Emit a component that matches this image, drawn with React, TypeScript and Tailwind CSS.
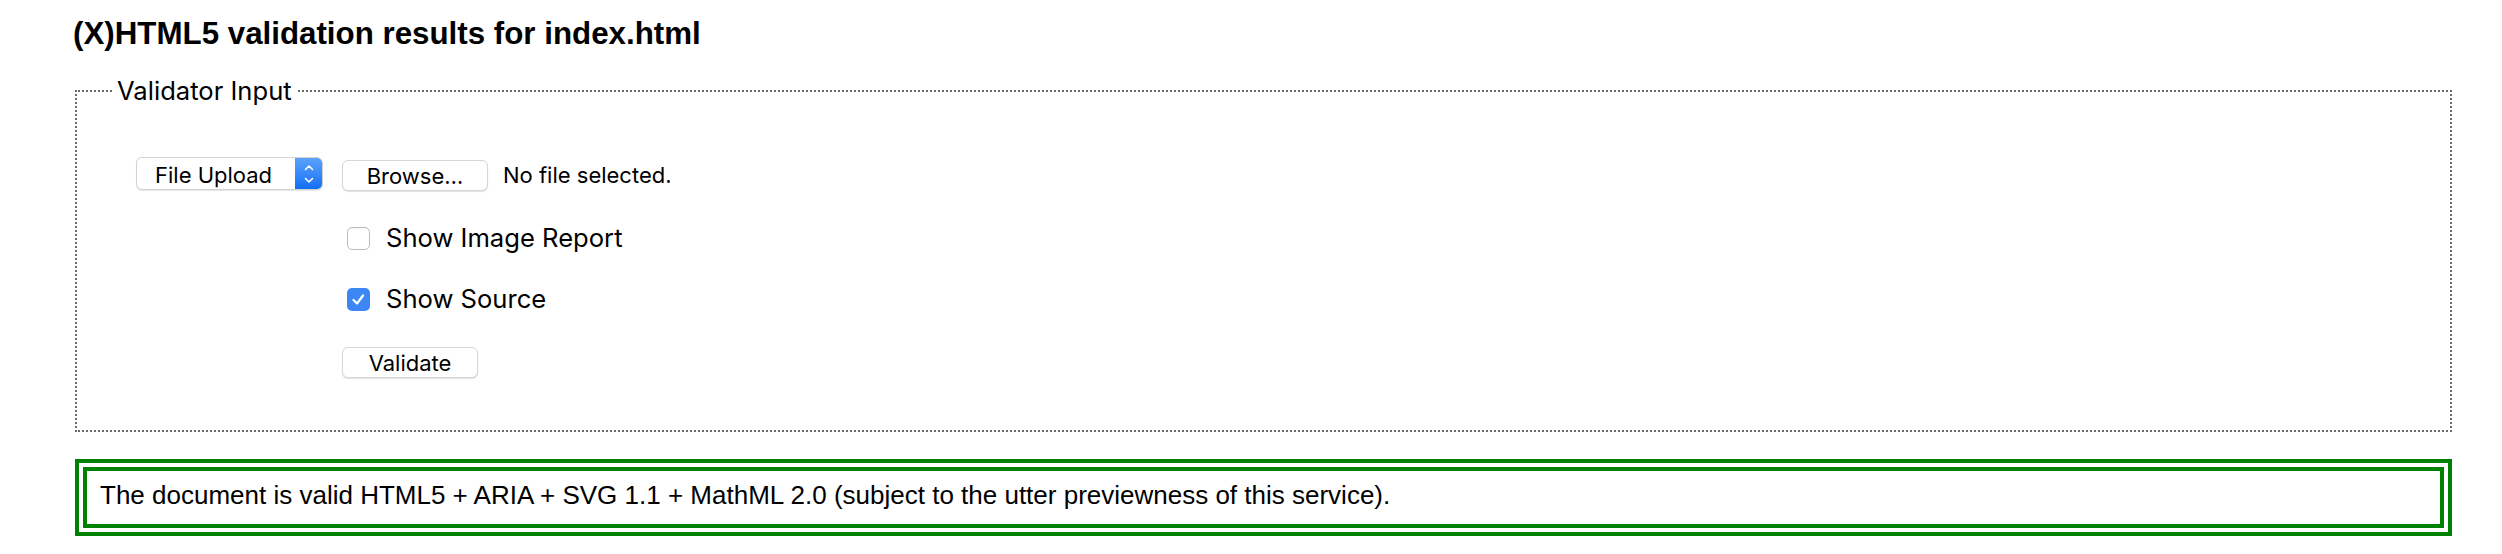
import React from 'react';

const sans = "font-['Liberation_Sans',Arial,sans-serif]";

function Chevrons() {
  return (
    <svg width="10" height="22" viewBox="0 0 10 22" fill="none" stroke="white" strokeWidth="1.6" strokeLinecap="round" strokeLinejoin="round">
      <path d="M1.5 6.5 L5 3 L8.5 6.5" />
      <path d="M1.5 15.5 L5 19 L8.5 15.5" />
    </svg>
  );
}

function Checkbox({ checked }: { checked?: boolean }) {
  if (checked) {
    return (
      <span className="flex h-[23px] w-[23px] items-center justify-center rounded-[5px] bg-[#3d87f5]">
        <svg width="23" height="23" viewBox="0 0 23 23" fill="none" stroke="white" strokeWidth="2.2" strokeLinecap="round" strokeLinejoin="round">
          <path d="M6.5 12 L10 15.5 L16 7.5" />
        </svg>
      </span>
    );
  }
  return <span className="h-[23px] w-[23px] rounded-[5px] border border-[#bdbdbd] bg-white shadow-[inset_0_1px_1px_rgba(0,0,0,0.04)]" />;
}

export default function App() {
  return (
    <div className="min-h-screen bg-white pl-[75px] pr-[50px] pt-[16px] text-black">
      <h2 className={`${sans} -ml-[2px] text-[31.3px] font-bold leading-[36px]`}>
        (X)HTML5 validation results for index.html
      </h2>

      <fieldset className="mt-[24px] border-2 border-dotted border-[#6b6b6b] pb-[52px] pt-[51px] font-['Inter',sans-serif]">
        <legend className="ml-[35px] px-[5px] text-[25.6px] leading-[30px]">Validator Input</legend>

        <div className="flex items-start pl-[59px]">
          <div className="flex h-[33px] w-[187px] overflow-hidden rounded-[6px] border border-[#d2d2d2] bg-white shadow-[0_1px_1px_rgba(0,0,0,0.1)]">
            <span className="flex-1 pl-[18px] pt-[3px] text-[22px] leading-[28px]">File Upload</span>
            <span className="flex w-[27px] items-center justify-center bg-gradient-to-b from-[#5aa2fa] to-[#0d6ef5]">
              <Chevrons />
            </span>
          </div>
          <button
            type="button"
            className="ml-[19px] mt-[3px] flex h-[31px] w-[146px] items-center justify-center rounded-[6px] border border-[#d6d6d6] bg-white pt-[1px] text-[22px] leading-[28px] shadow-[0_1px_1px_rgba(0,0,0,0.12)]"
          >
            Browse…
          </button>
          <span className="ml-[15px] mt-[4px] text-[22px] leading-[28px]">No file selected.</span>
        </div>

        <label className="mt-[32px] flex h-[30px] items-center pl-[270px]">
          <Checkbox />
          <span className="ml-[16px] text-[25.6px] leading-[30px]">Show Image Report</span>
        </label>

        <label className="mt-[31px] flex h-[30px] items-center pl-[270px]">
          <Checkbox checked />
          <span className="ml-[16px] text-[25.6px] leading-[30px]">Show Source</span>
        </label>

        <div className="mt-[33px] pl-[265px]">
          <button
            type="button"
            className="flex h-[31px] w-[136px] items-center justify-center rounded-[6px] border border-[#d6d6d6] bg-white pt-[1px] text-[22px] leading-[28px] shadow-[0_1px_1px_rgba(0,0,0,0.12)]"
          >
            Validate
          </button>
        </div>
      </fieldset>

      <div className={`${sans} mt-[27px] border-[12px] border-double border-[#008000] pb-[14px] pl-[13px] pt-[9px] text-[26px] leading-[30px]`}>
        The document is valid HTML5 + ARIA + SVG 1.1 + MathML 2.0 (subject to the utter previewness of this service).
      </div>
    </div>
  );
}
